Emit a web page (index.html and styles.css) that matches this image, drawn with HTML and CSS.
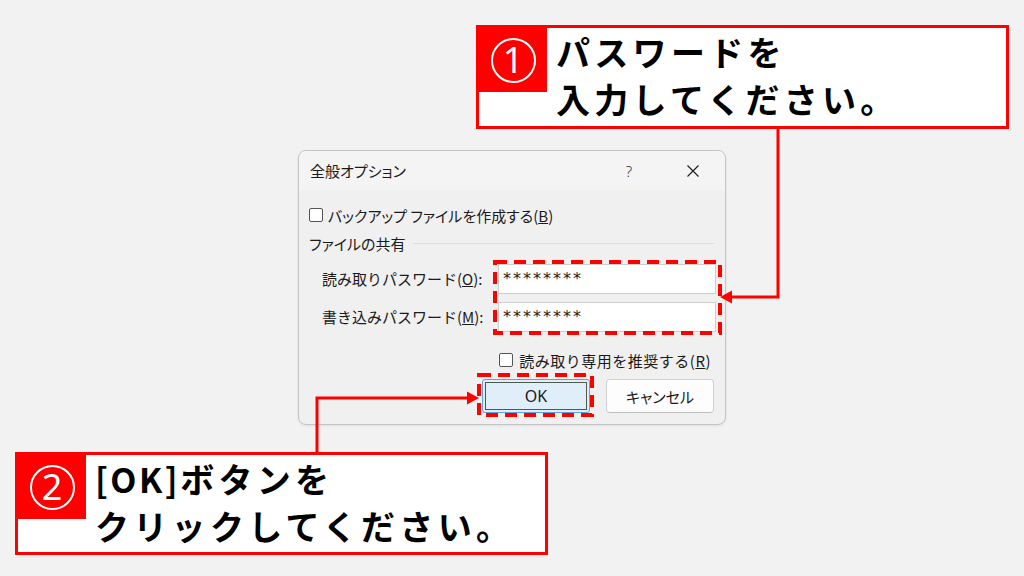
FILE: index.html
```html
<!DOCTYPE html>
<html lang="ja">
<head>
<meta charset="utf-8">
<title>全般オプション</title>
<link rel="stylesheet" href="styles.css">
</head>
<body>
<div class="stage">
  <div class="dialog">
    <div class="titlebar">
      <span class="title palt">全般オプション</span>
      <span class="tb-btn help">?</span>
      <span class="tb-btn close"><svg width="12" height="12" viewBox="0 0 12 12"><path d="M0.5 0.5 L11.5 11.5 M11.5 0.5 L0.5 11.5" stroke="#1a1a1a" stroke-width="1.1" fill="none"/></svg></span>
    </div>
    <div class="dbody">
      <div class="check row-backup"><span class="box"></span><span class="palt">バックアップ ファイルを作成する(<u>B</u>)</span></div>
      <div class="group"><span class="group-label palt">ファイルの共有</span><span class="group-line"></span></div>
      <div class="pw-grid">
        <span class="pw-label">読み取りパスワード(<u>O</u>):</span>
        <div class="input">********</div>
        <span class="pw-label">書き込みパスワード(<u>M</u>):</span>
        <div class="input">********</div>
      </div>
      <div class="check row-readonly"><span class="box"></span><span class="ro-text">読み取り専用を推奨する(<u>R</u>)</span></div>
      <div class="buttons">
        <div class="btn ok">OK</div>
        <div class="btn palt">キャンセル</div>
      </div>
    </div>
  </div>

  <div class="callout c1">
    <div class="badge"><span class="num">1</span></div>
    <div class="ctext">パスワードを<br>入力してください。</div>
  </div>

  <div class="callout c2">
    <div class="badge"><span class="num">2</span></div>
    <div class="ctext"><span class="latin">[OK]</span>ボタンを<br>クリックしてください。</div>
  </div>

  <svg class="overlay" width="1024" height="576" viewBox="0 0 1024 576">
    <rect x="495" y="262" width="225" height="71" fill="none" stroke="#ff0000" stroke-width="4" stroke-dasharray="12 7"/>
    <rect x="479" y="375" width="113" height="40" fill="none" stroke="#ff0000" stroke-width="4" stroke-dasharray="12 7"/>
    <polyline points="778,128 778,297 728,297" fill="none" stroke="#ff0000" stroke-width="3"/>
    <polygon points="720,297 732,290.5 732,303.5" fill="#ff0000"/>
    <polyline points="317,452 317,398 470,398" fill="none" stroke="#ff0000" stroke-width="3"/>
    <polygon points="479,398 467,391.5 467,404.5" fill="#ff0000"/>
  </svg>
</div>
</body>
</html>
```

FILE: styles.css
```css
html, body {
  margin: 0;
  padding: 0;
}
body {
  background: #f2f2f2;
  font-family: "Noto Sans CJK JP", "Noto Sans", sans-serif;
  color: #1a1a1a;
}
.stage {
  position: relative;
  width: 1024px;
  height: 576px;
  overflow: hidden;
  background: #f2f2f2;
}
.palt {
  font-feature-settings: "palt" 1;
}

/* dialog window */
.dialog {
  position: absolute;
  left: 298px;
  top: 150px;
  width: 428px;
  height: 275px;
  box-sizing: border-box;
  border: 1px solid #c4c4c4;
  border-radius: 8px;
  background: #f0f0f0;
  overflow: hidden;
  box-shadow: 0 1px 3px rgba(0,0,0,0.08);
  font-size: 15px;
}
.titlebar {
  height: 39px;
  background: #f4f4f4;
  display: flex;
  align-items: center;
}
.title {
  flex: 1;
  padding-left: 11px;
  font-size: 15px;
  color: #1a1a1a;
}
.tb-btn {
  width: 64px;
  height: 39px;
  display: flex;
  align-items: center;
  justify-content: center;
  flex: none;
}
.help {
  font-family: "Noto Sans", sans-serif;
  font-size: 15px;
  font-weight: 300;
  color: #333;
}
.dbody {
  padding: 0 9px 11px 10px;
}
.check {
  display: flex;
  align-items: center;
  height: 20px;
}
.box {
  width: 12px;
  height: 12px;
  border: 1px solid #555;
  border-radius: 2px;
  background: #fff;
  flex: none;
}
.row-backup {
  margin-top: 15px;
  gap: 5px;
}
.group {
  margin-top: 8px;
  height: 20px;
  display: flex;
  align-items: center;
}
.group-line {
  flex: 1;
  height: 1px;
  background: #dcdcdc;
  margin-left: 8px;
  margin-right: 2px;
}
.pw-grid {
  margin-top: 11px;
  display: grid;
  grid-template-columns: 176px 218px;
  row-gap: 8px;
  padding-left: 13px;
}
.pw-label {
  line-height: 30px;
  height: 30px;
}
.input {
  height: 30px;
  box-sizing: border-box;
  border: 1px solid #cdcdcd;
  background: #fff;
  padding-left: 4px;
  line-height: 27px;
  font-family: "DejaVu Sans", sans-serif;
  font-size: 16px;
  letter-spacing: 2px;
  color: #1a1a1a;
}
.row-readonly {
  margin-top: 18px;
  justify-content: flex-end;
  gap: 6px;
  margin-right: 5px;
}
.ro-text {
  letter-spacing: 0.5px;
}
.buttons {
  margin-top: 9px;
  display: flex;
  justify-content: flex-end;
  gap: 16px;
  margin-right: 2px;
}
.btn {
  width: 108px;
  height: 34px;
  box-sizing: border-box;
  border: 1px solid #d0d0d0;
  border-bottom-color: #bdbdbd;
  border-radius: 4px;
  background: #fdfdfd;
  display: flex;
  align-items: center;
  justify-content: center;
  font-size: 15px;
  color: #1a1a1a;
}
.btn.ok {
  background: #e0eef9;
  border: 1px solid #5ea3de;
  border-radius: 3px;
  outline: 1px solid #4d5a4d;
  outline-offset: -4px;
  font-family: "Noto Sans", sans-serif;
  font-size: 16px;
}

/* callouts */
.callout {
  position: absolute;
  width: 533px;
  height: 104px;
  box-sizing: border-box;
  border: 3px solid #ff0000;
  background: #fff;
  display: flex;
  align-items: flex-start;
}
.c1 {
  left: 476px;
  top: 25px;
}
.c2 {
  left: 15px;
  top: 452px;
  height: 103px;
}
.badge {
  width: 68px;
  height: 64px;
  background: #ff0000;
  display: flex;
  align-items: center;
  justify-content: center;
  flex: none;
}
.num {
  width: 41px;
  height: 41px;
  border: 2px solid #fff;
  border-radius: 50%;
  display: flex;
  align-items: center;
  justify-content: center;
  color: #fff;
  font-family: "Noto Sans", sans-serif;
  font-size: 36px;
  font-weight: 400;
  line-height: 1;
}
.ctext {
  padding: 0 0 0 9px;
  font-size: 34px;
  font-weight: 700;
  line-height: 47px;
  letter-spacing: 4.3px;
  color: #000;
  white-space: nowrap;
}
.latin {
  letter-spacing: 2.5px;
}

.overlay {
  position: absolute;
  left: 0;
  top: 0;
  pointer-events: none;
}
```
